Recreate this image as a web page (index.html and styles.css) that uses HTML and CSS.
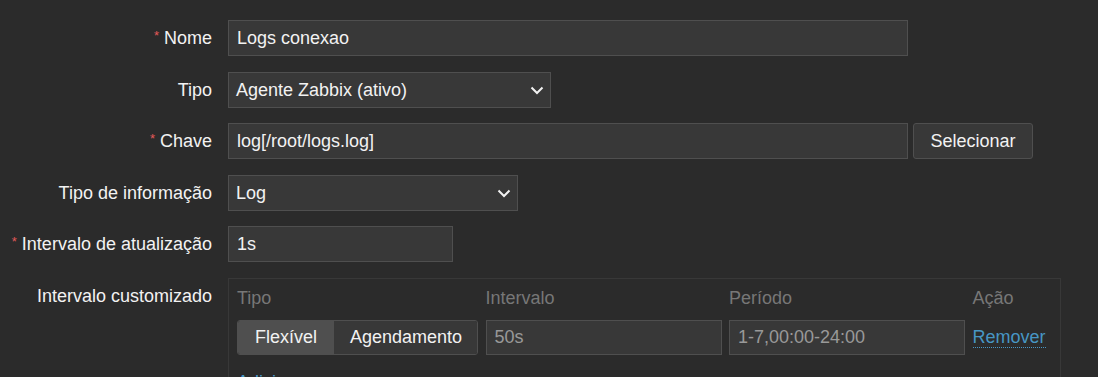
FILE: index.html
```html
<!DOCTYPE html>
<html lang="pt">
<head>
 <meta charset="UTF-8">
 <title>Item</title>
 <link rel="stylesheet" href="styles.css">
</head>
<body>

 <div class="form">

 <div class="row">
 <label class="label"><span class="req">*</span> Nome</label>
 <div class="field"><div class="input w-wide">Logs conexao</div></div>
 </div>

 <div class="row">
 <label class="label">Tipo</label>
 <div class="field">
 <div class="input select w-type">Agente Zabbix (ativo)
 <svg class="chev" width="14" height="9" viewBox="0 0 14 9"><polyline points="1.5,1.5 7,7 12.5,1.5" fill="none" stroke="#f2f2f2" stroke-width="2"/></svg>
 </div>
 </div>
 </div>

 <div class="row">
 <label class="label"><span class="req">*</span> Chave</label>
 <div class="field">
 <div class="input w-wide">log[/root/logs.log]</div>
 <button class="btn">Selecionar</button>
 </div>
 </div>

 <div class="row">
 <label class="label">Tipo de informação</label>
 <div class="field">
 <div class="input select w-info">Log
 <svg class="chev" width="14" height="9" viewBox="0 0 14 9"><polyline points="1.5,1.5 7,7 12.5,1.5" fill="none" stroke="#f2f2f2" stroke-width="2"/></svg>
 </div>
 </div>
 </div>

 <div class="row">
 <label class="label"><span class="req">*</span> Intervalo de atualização</label>
 <div class="field"><div class="input w-short">1s</div></div>
 </div>

 <div class="row">
 <label class="label">Intervalo customizado</label>
 <div class="field">
 <div class="custom">
 <div class="grid">
 <div class="th">Tipo</div>
 <div class="th">Intervalo</div>
 <div class="th">Período</div>
 <div class="th">Ação</div>

 <div class="seg">
 <span class="seg-item active">Flexível</span>
 <span class="seg-item">Agendamento</span>
 </div>
 <div class="input small dim">50s</div>
 <div class="input small dim">1-7,00:00-24:00</div>
 <div class="act"><a class="link">Remover</a></div>
 </div>
 <a class="add">Adicionar</a>
 </div>
 </div>
 </div>

 </div>

</body>
</html>
```

FILE: styles.css
```css
/* Base */
body {
margin: 0;
background: #2b2b2b;
color: #f2f2f2;
font-family: "Liberation Sans", Arial, sans-serif;
font-size: 18px;
}

.form {
padding-top: 20px;
}

/* Linhas do formulario */
.row {
display: grid;
grid-template-columns: 212px 1fr;
column-gap: 16px;
margin-bottom: 15.6px;
}

.label {
text-align: right;
height: 36px;
line-height: 36px;
white-space: nowrap;
}

.req {
color: #e45959;
font-size: 13px;
line-height: 1;
vertical-align: 4px;
}

.field {
display: flex;
align-items: flex-start;
gap: 5px;
}

/* Campos */
.input {
box-sizing: border-box;
height: 36px;
line-height: 34px;
padding: 0 8px;
background: #383838;
border: 1px solid #4f4f4f;
white-space: nowrap;
}

.w-wide { width: 680px; }
.w-type { width: 323px; }
.w-info { width: 290px; }
.w-short { width: 225px; }

.select {
position: relative;
padding-left: 7px;
}

.chev {
position: absolute;
right: 6px;
top: 13px;
}

.btn {
box-sizing: border-box;
height: 36px;
width: 120px;
background: #383838;
border: 1px solid #4f4f4f;
border-radius: 3px;
color: #f2f2f2;
font-family: inherit;
font-size: 18px;
padding: 0;
}

/* Intervalo customizado */
.custom {
box-sizing: border-box;
width: 833px;
height: 120px;
border: 1px solid #383838;
padding: 9px 8px;
}

.grid {
display: grid;
grid-template-columns: 241px 236px 236px 1fr;
column-gap: 7.5px;
row-gap: 11px;
}

.th {
color: #777;
}

.seg {
display: flex;
height: 35px;
box-sizing: border-box;
border: 1px solid #4f4f4f;
border-radius: 3px;
overflow: hidden;
}

.seg-item {
line-height: 33px;
padding: 0 15px 0 16px;
background: #383838;
}

.seg-item.active {
background: #4f4f4f;
padding: 0 17px;
}

.input.small {
height: 35px;
line-height: 33px;
}

.dim {
color: #999;
}

.act {
line-height: 35px;
}

.link {
color: #4796c4;
border-bottom: 1px dotted #4796c4;
}

.add {
display: block;
margin-top: 17px;
color: #4796c4;
}
```
